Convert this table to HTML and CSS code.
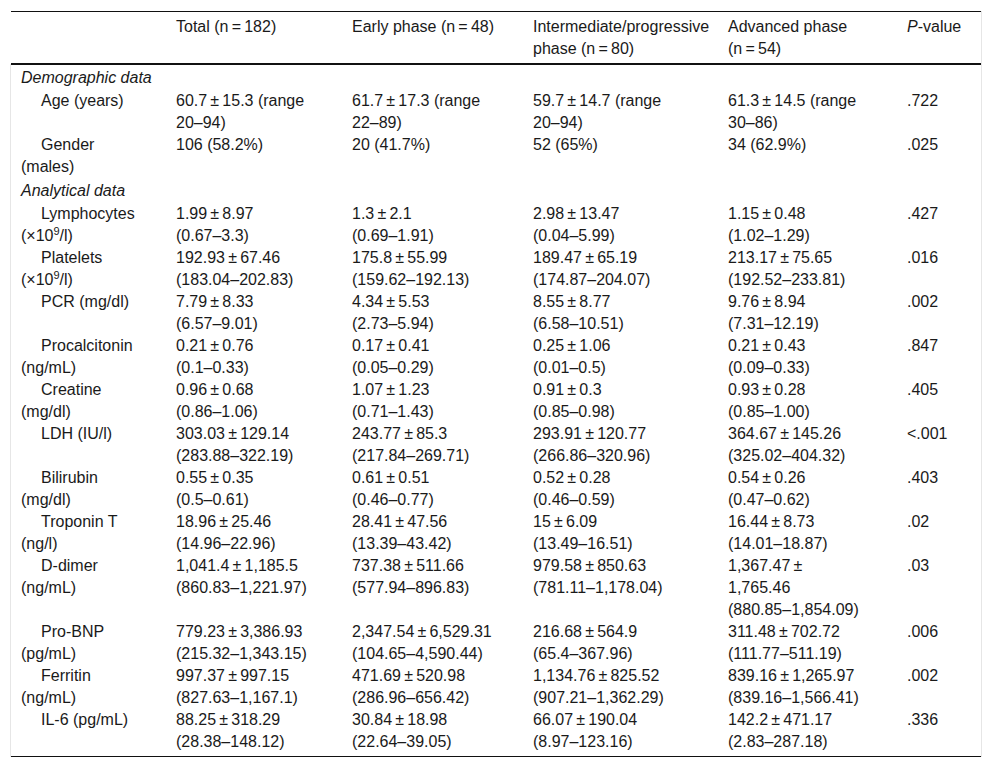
FILE: index.html
```html
<!DOCTYPE html>
<html lang="en">
<head>
<meta charset="utf-8">
<title>Table</title>
<link rel="stylesheet" href="styles.css">
</head>
<body>
<div class="wrap">
<table class="data">
<colgroup>
<col class="c-label"><col class="c-total"><col class="c-early"><col class="c-inter"><col class="c-adv"><col class="c-p">
</colgroup>
<thead>
<tr>
<th></th>
<th>Total (n&#8201;=&#8201;182)</th>
<th>Early phase (n&#8201;=&#8201;48)</th>
<th>Intermediate/progressive phase (n&#8201;=&#8201;80)</th>
<th>Advanced phase (n&#8201;=&#8201;54)</th>
<th><i>P</i>-value</th>
</tr>
</thead>
<tbody>
<tr class="section"><td colspan="6"><i>Demographic data</i></td></tr>
<tr><td>Age (years)</td><td>60.7&#8201;±&#8201;15.3 (range<br>20–94)</td><td>61.7&#8201;±&#8201;17.3 (range<br>22–89)</td><td>59.7&#8201;±&#8201;14.7 (range<br>20–94)</td><td>61.3&#8201;±&#8201;14.5 (range<br>30–86)</td><td>.722</td></tr>
<tr><td>Gender (males)</td><td>106 (58.2%)</td><td>20 (41.7%)</td><td>52 (65%)</td><td>34 (62.9%)</td><td>.025</td></tr>
<tr class="section"><td colspan="6"><i>Analytical data</i></td></tr>
<tr><td>Lymphocytes (×10<sup>9</sup>/l)</td><td>1.99&#8201;±&#8201;8.97<br>(0.67–3.3)</td><td>1.3&#8201;±&#8201;2.1<br>(0.69–1.91)</td><td>2.98&#8201;±&#8201;13.47<br>(0.04–5.99)</td><td>1.15&#8201;±&#8201;0.48<br>(1.02–1.29)</td><td>.427</td></tr>
<tr><td>Platelets (×10<sup>9</sup>/l)</td><td>192.93&#8201;±&#8201;67.46<br>(183.04–202.83)</td><td>175.8&#8201;±&#8201;55.99<br>(159.62–192.13)</td><td>189.47&#8201;±&#8201;65.19<br>(174.87–204.07)</td><td>213.17&#8201;±&#8201;75.65<br>(192.52–233.81)</td><td>.016</td></tr>
<tr><td>PCR (mg/dl)</td><td>7.79&#8201;±&#8201;8.33<br>(6.57–9.01)</td><td>4.34&#8201;±&#8201;5.53<br>(2.73–5.94)</td><td>8.55&#8201;±&#8201;8.77<br>(6.58–10.51)</td><td>9.76&#8201;±&#8201;8.94<br>(7.31–12.19)</td><td>.002</td></tr>
<tr><td>Procalcitonin (ng/mL)</td><td>0.21&#8201;±&#8201;0.76<br>(0.1–0.33)</td><td>0.17&#8201;±&#8201;0.41<br>(0.05–0.29)</td><td>0.25&#8201;±&#8201;1.06<br>(0.01–0.5)</td><td>0.21&#8201;±&#8201;0.43<br>(0.09–0.33)</td><td>.847</td></tr>
<tr><td>Creatine (mg/dl)</td><td>0.96&#8201;±&#8201;0.68<br>(0.86–1.06)</td><td>1.07&#8201;±&#8201;1.23<br>(0.71–1.43)</td><td>0.91&#8201;±&#8201;0.3<br>(0.85–0.98)</td><td>0.93&#8201;±&#8201;0.28<br>(0.85–1.00)</td><td>.405</td></tr>
<tr><td>LDH (IU/l)</td><td>303.03&#8201;±&#8201;129.14<br>(283.88–322.19)</td><td>243.77&#8201;±&#8201;85.3<br>(217.84–269.71)</td><td>293.91&#8201;±&#8201;120.77<br>(266.86–320.96)</td><td>364.67&#8201;±&#8201;145.26<br>(325.02–404.32)</td><td>&lt;.001</td></tr>
<tr><td>Bilirubin (mg/dl)</td><td>0.55&#8201;±&#8201;0.35<br>(0.5–0.61)</td><td>0.61&#8201;±&#8201;0.51<br>(0.46–0.77)</td><td>0.52&#8201;±&#8201;0.28<br>(0.46–0.59)</td><td>0.54&#8201;±&#8201;0.26<br>(0.47–0.62)</td><td>.403</td></tr>
<tr><td>Troponin T (ng/l)</td><td>18.96&#8201;±&#8201;25.46<br>(14.96–22.96)</td><td>28.41&#8201;±&#8201;47.56<br>(13.39–43.42)</td><td>15&#8201;±&#8201;6.09<br>(13.49–16.51)</td><td>16.44&#8201;±&#8201;8.73<br>(14.01–18.87)</td><td>.02</td></tr>
<tr><td>D-dimer (ng/mL)</td><td>1,041.4&#8201;±&#8201;1,185.5<br>(860.83–1,221.97)</td><td>737.38&#8201;±&#8201;511.66<br>(577.94–896.83)</td><td>979.58&#8201;±&#8201;850.63<br>(781.11–1,178.04)</td><td>1,367.47&#8201;±&#8201;1,765.46<br>(880.85–1,854.09)</td><td>.03</td></tr>
<tr><td>Pro-BNP (pg/mL)</td><td>779.23&#8201;±&#8201;3,386.93<br>(215.32–1,343.15)</td><td>2,347.54&#8201;±&#8201;6,529.31<br>(104.65–4,590.44)</td><td>216.68&#8201;±&#8201;564.9<br>(65.4–367.96)</td><td>311.48&#8201;±&#8201;702.72<br>(111.77–511.19)</td><td>.006</td></tr>
<tr><td>Ferritin (ng/mL)</td><td>997.37&#8201;±&#8201;997.15<br>(827.63–1,167.1)</td><td>471.69&#8201;±&#8201;520.98<br>(286.96–656.42)</td><td>1,134.76&#8201;±&#8201;825.52<br>(907.21–1,362.29)</td><td>839.16&#8201;±&#8201;1,265.97<br>(839.16–1,566.41)</td><td>.002</td></tr>
<tr class="last"><td>IL-6 (pg/mL)</td><td>88.25&#8201;±&#8201;318.29<br>(28.38–148.12)</td><td>30.84&#8201;±&#8201;18.98<br>(22.64–39.05)</td><td>66.07&#8201;±&#8201;190.04<br>(8.97–123.16)</td><td>142.2&#8201;±&#8201;471.17<br>(2.83–287.18)</td><td>.336</td></tr>
</tbody>
</table>
</div>
</body>
</html>
```

FILE: styles.css
```css
html, body {
  margin: 0;
  padding: 0;
  background: #fff;
}

body {
  font-family: "Liberation Sans", Arial, sans-serif;
  font-size: 16px;
  line-height: 22px;
  color: #1a1a1a;
}

.wrap {
  margin: 11px 10px 0 10px;
  border-right: 1px solid #e6e6e6;
}

.data {
  width: 970px;
  margin-left: 1px;
  border-collapse: collapse;
  table-layout: fixed;
}

.c-label { width: 155px; }
.c-total { width: 176px; }
.c-early { width: 181px; }
.c-inter { width: 195px; }
.c-adv   { width: 179px; }
.c-p     { width: 84px; }

.data th,
.data td {
  text-align: left;
  vertical-align: top;
  font-weight: normal;
  padding: 0 10px;
}

.data thead th {
  border-top: 1px solid #111;
  border-bottom: 2px solid #111;
  padding-top: 4px;
  padding-bottom: 3px;
}

.data tbody td:first-child {
  text-indent: 20px;
  padding-right: 25px;
  box-shadow: -1px 0 0 #e6e6e6;
}

.data tbody td:nth-child(5),
.data thead th:nth-child(5) {
  padding-right: 35px;
}

.data tbody tr.section td {
  text-indent: 0;
  padding-top: 2px;
  padding-bottom: 1px;
}

.data tbody tr.last td {
  padding-bottom: 3px;
  border-bottom: 1px solid #111;
}

.data sup {
  font-size: 11px;
  line-height: 0;
  vertical-align: super;
}
```
